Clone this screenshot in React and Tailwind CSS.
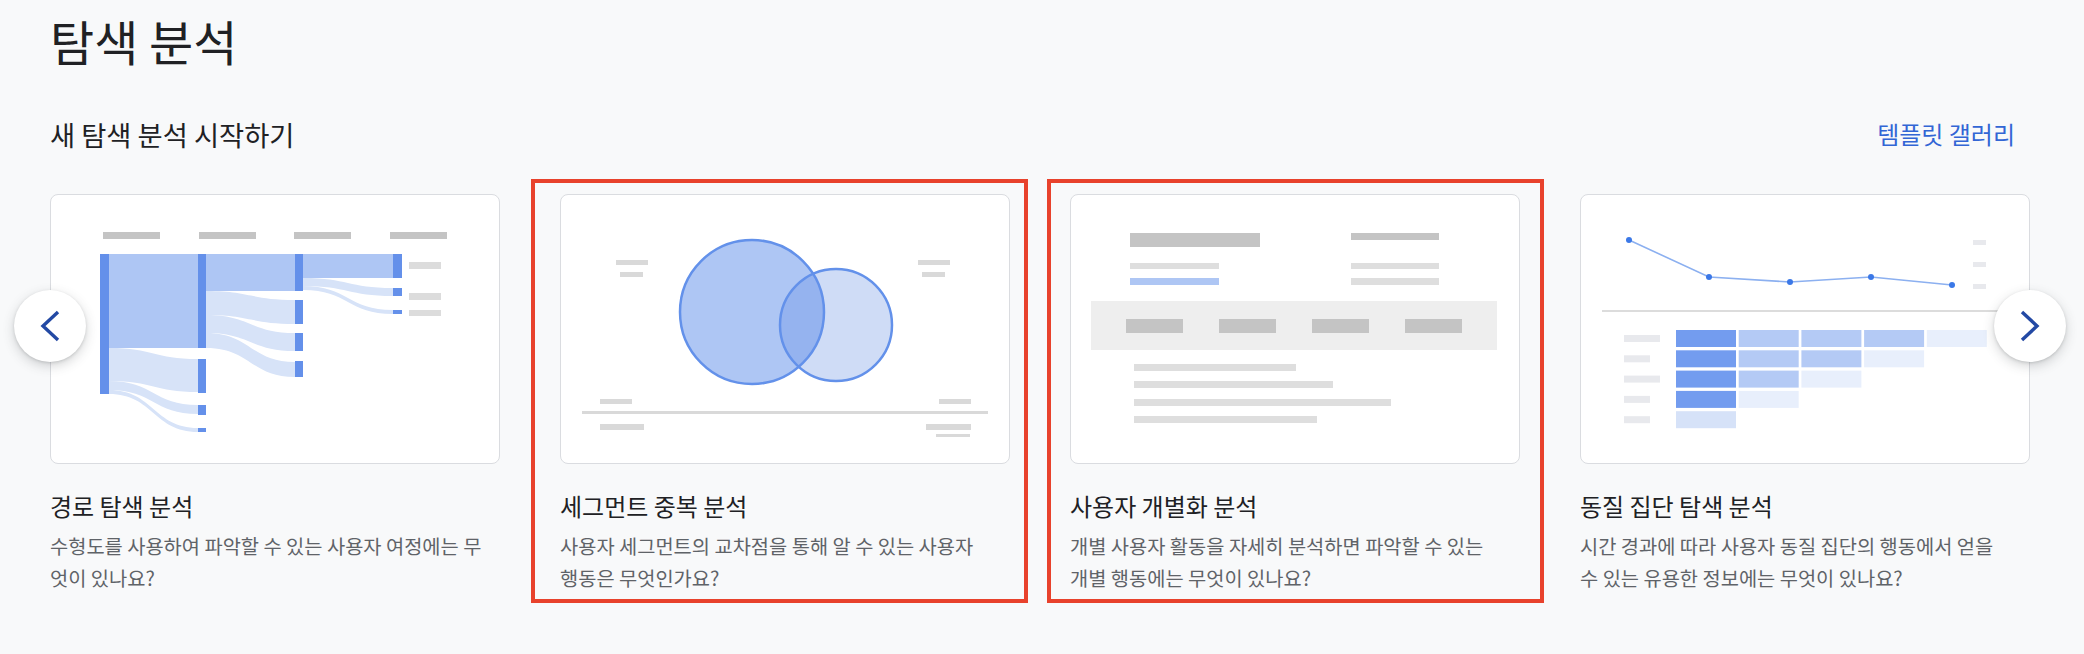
import React from 'react';

const DARK = '#c4c4c4';
const LIGHT = '#dcdcdc';
const BLUE_MID = '#aec6f4';
const BLUE_LIGHT = '#d7e3f8';
const BLUE_NODE = '#6490ea';

// band between two nodes (sankey flow)
const band = (x0, a0, b0, x1, a1, b1) => {
  const xm = (x0 + x1) / 2;
  return `M${x0} ${a0} C${xm} ${a0} ${xm} ${a1} ${x1} ${a1} L${x1} ${b1} C${xm} ${b1} ${xm} ${b0} ${x0} ${b0} Z`;
};

const PathDiagram = () => (
  <svg width="448" height="268" viewBox="1 1 448 268">
    {[53, 149, 244, 340].map((x) => (
      <rect key={x} x={x} y="38" width="57" height="7" fill={DARK} />
    ))}
    {/* flows */}
    <rect x="59" y="60" width="89" height="94" fill={BLUE_MID} />
    <path d={band(59, 154, 187, 148, 165, 198)} fill={BLUE_LIGHT} />
    <path d={band(59, 187, 196, 148, 211, 220)} fill={BLUE_LIGHT} />
    <path d={band(59, 196, 200, 148, 234, 238)} fill={BLUE_LIGHT} />
    <rect x="156" y="60" width="89" height="37" fill={BLUE_MID} />
    <path d={band(156, 97, 121, 245, 106, 130)} fill={BLUE_LIGHT} />
    <path d={band(156, 121, 139, 245, 139, 157)} fill={BLUE_LIGHT} />
    <path d={band(156, 139, 154, 245, 168, 183)} fill={BLUE_LIGHT} />
    <rect x="253" y="60" width="90" height="24" fill={BLUE_MID} />
    <path d={band(253, 84, 92, 343, 94, 102)} fill={BLUE_LIGHT} />
    <path d={band(253, 92, 96, 343, 116, 120)} fill={BLUE_LIGHT} />
    {/* nodes */}
    <rect x="50" y="60" width="9" height="140" fill={BLUE_NODE} />
    <rect x="148" y="60" width="8" height="94" fill={BLUE_NODE} />
    <rect x="148" y="165" width="8" height="34" fill={BLUE_NODE} />
    <rect x="148" y="211" width="8" height="10" fill={BLUE_NODE} />
    <rect x="148" y="234" width="8" height="4" fill={BLUE_NODE} />
    <rect x="245" y="60" width="8" height="37" fill={BLUE_NODE} />
    <rect x="245" y="106" width="8" height="24" fill={BLUE_NODE} />
    <rect x="245" y="139" width="8" height="18" fill={BLUE_NODE} />
    <rect x="245" y="167" width="8" height="16" fill={BLUE_NODE} />
    <rect x="343" y="60" width="9" height="24" fill={BLUE_NODE} />
    <rect x="343" y="94" width="9" height="8" fill={BLUE_NODE} />
    <rect x="343" y="116" width="9" height="4" fill={BLUE_NODE} />
    <rect x="359" y="68" width="32" height="7" fill={LIGHT} />
    <rect x="359" y="99" width="32" height="7" fill={LIGHT} />
    <rect x="359" y="116" width="32" height="6" fill={LIGHT} />
  </svg>
);

const OverlapDiagram = () => (
  <svg width="448" height="268" viewBox="1 1 448 268">
    <defs>
      <clipPath id="bigc">
        <circle cx="192" cy="118" r="72" />
      </clipPath>
    </defs>
    <rect x="56" y="66" width="32" height="5" fill="#d9d9d9" />
    <rect x="60" y="78" width="23" height="5" fill="#d9d9d9" />
    <rect x="358" y="66" width="32" height="5" fill="#d9d9d9" />
    <rect x="362" y="78" width="23" height="5" fill="#d9d9d9" />
    <circle cx="192" cy="118" r="72" fill="#aec6f4" />
    <circle cx="276" cy="131" r="56" fill="#cfdcf6" />
    <circle cx="276" cy="131" r="56" fill="#95b3ef" clipPath="url(#bigc)" />
    <circle cx="192" cy="118" r="72" fill="none" stroke="#6391ea" strokeWidth="2.5" />
    <circle cx="276" cy="131" r="56" fill="none" stroke="#6391ea" strokeWidth="2.5" />
    <rect x="40" y="205" width="32" height="5" fill="#d9d9d9" />
    <rect x="22" y="217" width="406" height="3" fill="#d9d9d9" />
    <rect x="40" y="230" width="44" height="6" fill="#d9d9d9" />
    <rect x="379" y="205" width="32" height="5" fill="#d9d9d9" />
    <rect x="366" y="230" width="45" height="6" fill="#d9d9d9" />
    <rect x="376" y="240" width="34" height="3" fill="#d9d9d9" />
  </svg>
);

const UserDiagram = () => (
  <svg width="448" height="268" viewBox="1 1 448 268">
    <rect x="60" y="39" width="130" height="14" fill={DARK} />
    <rect x="281" y="39" width="88" height="7" fill={DARK} />
    <rect x="60" y="69" width="89" height="6" fill="#dedede" />
    <rect x="60" y="84" width="89" height="7" fill={BLUE_MID} />
    <rect x="281" y="69" width="88" height="6" fill="#dedede" />
    <rect x="281" y="84" width="88" height="7" fill="#dedede" />
    <rect x="21" y="107" width="406" height="49" fill="#eeeeee" />
    {[56, 149, 242, 335].map((x) => (
      <rect key={x} x={x} y="125" width="57" height="14" fill={DARK} />
    ))}
    <rect x="64" y="170" width="162" height="7" fill="#dedede" />
    <rect x="64" y="187" width="199" height="7" fill="#dedede" />
    <rect x="64" y="205" width="257" height="7" fill="#dedede" />
    <rect x="64" y="222" width="183" height="7" fill="#dedede" />
  </svg>
);

const cohortRows = [
  ['#739cef', '#b4caf5', '#b4caf5', '#b4caf5', '#e8effc'],
  ['#739cef', '#b4caf5', '#b4caf5', '#e8effc'],
  ['#739cef', '#b4caf5', '#e8effc'],
  ['#739cef', '#e8effc'],
  ['#d6e2f8'],
];
const labelW = [36, 26, 36, 26, 26];
const points = [[49, 46], [129, 83], [210, 88], [291, 83], [372, 91]];

const CohortDiagram = () => (
  <svg width="448" height="268" viewBox="1 1 448 268">
    <polyline points={points.map((p) => p.join(',')).join(' ')} fill="none" stroke="#8cb0f0" strokeWidth="1.6" />
    {points.map(([x, y]) => (
      <circle key={x} cx={x} cy={y} r="3" fill="#3b78e7" />
    ))}
    {[46, 68, 90].map((y) => (
      <rect key={y} x="393" y={y} width="13" height="5" fill="#e8e9ed" />
    ))}
    <rect x="22" y="116" width="406" height="2" fill="#dcdcdc" />
    {cohortRows.map((row, r) => (
      <g key={r}>
        <rect x="44" y={141 + r * 20.3} width={labelW[r]} height="7" fill="#e8e9ed" />
        {row.map((c, i) => (
          <rect key={i} x={96 + i * 62.7} y={136 + r * 20.3} width="60" height="17" fill={c} />
        ))}
      </g>
    ))}
  </svg>
);

const cards = [
  {
    title: '경로 탐색 분석',
    lines: ['수형도를 사용하여 파악할 수 있는 사용자 여정에는 무', '엇이 있나요?'],
    Diagram: PathDiagram,
  },
  {
    title: '세그먼트 중복 분석',
    lines: ['사용자 세그먼트의 교차점을 통해 알 수 있는 사용자', '행동은 무엇인가요?'],
    Diagram: OverlapDiagram,
    box: 'absolute -left-[29px] -right-[18px] -top-[15px] -bottom-[9px] border-[4px] border-[#e8422c] pointer-events-none',
  },
  {
    title: '사용자 개별화 분석',
    lines: ['개별 사용자 활동을 자세히 분석하면 파악할 수 있는', '개별 행동에는 무엇이 있나요?'],
    Diagram: UserDiagram,
    box: 'absolute -left-[23px] -right-[24px] -top-[15px] -bottom-[9px] border-[4px] border-[#e8422c] pointer-events-none',
  },
  {
    title: '동질 집단 탐색 분석',
    lines: ['시간 경과에 따라 사용자 동질 집단의 행동에서 얻을', '수 있는 유용한 정보에는 무엇이 있나요?'],
    Diagram: CohortDiagram,
  },
];

const NavButton = ({ side }) => (
  <button
    className={
      side === 'left'
        ? 'absolute -left-[36px] top-[96px] w-[72px] h-[72px] rounded-full bg-white shadow-[0_4px_12px_rgba(60,64,67,0.22),0_1px_3px_rgba(60,64,67,0.18)] flex items-center justify-center'
        : 'absolute -right-[36px] top-[96px] w-[72px] h-[72px] rounded-full bg-white shadow-[0_4px_12px_rgba(60,64,67,0.22),0_1px_3px_rgba(60,64,67,0.18)] flex items-center justify-center'
    }
  >
    <svg width="72" height="72" viewBox="0 0 72 72">
      <path
        d={side === 'left' ? 'M44 22 L29 36 L44 50' : 'M28 22 L43 36 L28 50'}
        fill="none"
        stroke="#2349a4"
        strokeWidth="3.4"
      />
    </svg>
  </button>
);

const App = () => {
  return (
    <div className="min-h-screen bg-[#f8f9fa] font-['Noto_Sans_CJK_KR',sans-serif] text-[#202124]">
      <div className="pl-[50px] pr-[54px] pt-[10px]">
        <h1 className="text-[48px] leading-[60px] font-normal">탐색 분석</h1>

        <div className="mt-[46px] flex items-center justify-between pr-[15px]">
          <h2 className="text-[27.3px] leading-[36px] font-normal">새 탐색 분석 시작하기</h2>
          <a href="#" className="text-[24px] leading-[36px] text-[#3266d5]">
            템플릿 갤러리
          </a>
        </div>

        {/* carousel */}
        <div className="relative mt-[42px] flex gap-[60px]">
          {cards.map(({ title, lines, Diagram, box }) => (
            <div key={title} className="relative w-[450px] shrink-0">
              <div className="h-[270px] w-[450px] rounded-[8px] border border-[#dadce0] bg-white overflow-hidden">
                <Diagram />
              </div>
              <h3 className="mt-[27px] text-[24px] leading-[30px] font-normal whitespace-nowrap">{title}</h3>
              <p className="mt-[9px] text-[19.8px] leading-[32px] text-[#5f6368] whitespace-nowrap">
                {lines[0]}
                <br />
                {lines[1]}
              </p>
              {box && <div className={box} />}
            </div>
          ))}
          <NavButton side="left" />
          <NavButton side="right" />
        </div>
      </div>
    </div>
  );
};

export default App;
